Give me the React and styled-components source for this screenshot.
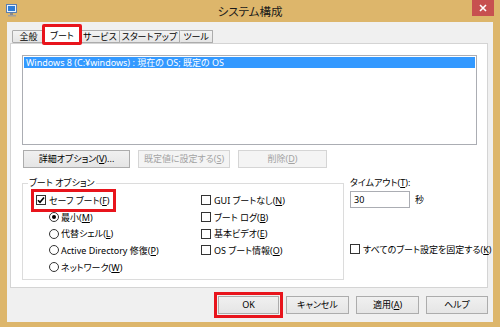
import React from 'react'
import styled, { createGlobalStyle } from 'styled-components'

const GlobalStyle = createGlobalStyle`
  body { margin: 0; background: #fff; }
  * { box-sizing: border-box; }
`

const MARK = '#E8141C'

const Window = styled.div`
  width: 500px;
  height: 327px;
  background: #DDB66B;
  display: flex;
  flex-direction: column;
  font-family: "Noto Sans", "Noto Sans CJK JP", sans-serif;
  font-feature-settings: "palt";
  font-size: 9px;
  color: #000;
`

const TitleBar = styled.div`
  height: 22px;
  display: grid;
  grid-template-columns: 1fr auto 1fr;
  align-items: start;
`

const AppIcon = styled.div`
  padding: 4px 0 0 6px;
  display: flex;
`

const Title = styled.div`
  font-size: 11.5px;
  line-height: 22px;
  padding-top: 1px;
  color: #1a1a1a;
`

const CloseButton = styled.div`
  justify-self: end;
  margin-right: 6px;
  width: 22px;
  height: 16px;
  background: #C75050;
  display: flex;
  align-items: center;
  justify-content: center;
`

const Client = styled.div`
  flex: 1;
  margin: 0 7px 5px;
  background: #F0F0F0;
  display: flex;
  flex-direction: column;
  padding: 4px 5px 0 3px;
`

const TabRow = styled.div`
  height: 17px;
  display: flex;
  align-items: flex-end;
  padding-left: 2px;
`

const Tab = styled.div`
  position: relative;
  z-index: ${p => (p.$active ? 2 : 1)};
  min-width: ${p => (p.$active ? 38 : 33)}px;
  height: ${p => (p.$active ? 19 : 13)}px;
  margin: 0 0 ${p => (p.$active ? -1 : 0)}px ${p => (p.$active ? -2 : 0)}px;
  padding: 0 ${p => (p.$active ? 6 : 2)}px;
  display: flex;
  align-items: center;
  justify-content: center;
  background: ${p => (p.$active ? '#fff' : 'linear-gradient(#F3F3F3, #E5E5E5)')};
  border: 1px solid #ACACAC;
  border-bottom: ${p => (p.$active ? 'none' : '1px solid #ACACAC')};
  border-left-width: ${p => (p.$first || p.$active ? 1 : 0)}px;
  outline: ${p => (p.$marked ? `3px solid ${MARK}` : 'none')};
  outline-offset: -2px;
  border-radius: 1px;
`

const Panel = styled.div`
  height: 245px;
  background: #fff;
  border: 1px solid #D4D4D4;
  padding: 11px 11px 0 11px;
  display: flex;
  flex-direction: column;
`

const ListBox = styled.div`
  width: 455px;
  height: 90px;
  border: 1px solid #ABADB3;
  padding: 1px;
  background: #fff;
`

const ListItem = styled.div`
  height: 11px;
  line-height: 11px;
  padding-left: 2px;
  background: ${p => (p.$selected ? '#3399FF' : 'transparent')};
  color: ${p => (p.$selected ? '#fff' : '#000')};
  white-space: nowrap;
`

const ButtonRow = styled.div`
  display: flex;
  gap: 8px;
  margin: 5px 0 0 1px;
`

const Button = styled.button`
  width: ${p => p.$w}px;
  height: 18px;
  padding: 0;
  font: inherit;
  line-height: 16px;
  white-space: nowrap;
  color: ${p => (p.disabled ? '#A3A3A3' : '#000')};
  background: ${p => (p.disabled ? '#F4F4F4' : 'linear-gradient(#F0F0F0, #E5E5E5)')};
  border: 1px solid ${p => (p.disabled ? '#D5D5D5' : '#ACACAC')};
  border-radius: 0;
  outline: ${p => (p.$marked ? `3px solid ${MARK}` : 'none')};
  outline-offset: 1px;
`

const Lower = styled.div`
  display: flex;
  gap: 6px;
  margin-top: 8px;
`

const Group = styled.fieldset`
  flex: none;
  width: 322px;
  margin: 0;
  padding: 2px 0 4px 13px;
  border: 1px solid #DCDCDC;
  display: flex;
  min-width: 0;
`

const Legend = styled.legend`
  padding: 0 1px;
  margin-left: -8px;
  line-height: 14px;
`

const Column = styled.div`
  width: ${p => p.$w || 'auto'};
  display: flex;
  flex-direction: column;
  align-items: flex-start;
`

const Option = styled.label`
  height: 16.7px;
  display: flex;
  align-items: center;
  gap: ${p => (p.$radio ? 2 : 3)}px;
  margin-left: ${p => (p.$indent ? 13 : 0)}px;
  white-space: nowrap;
  ${p =>
    p.$marked &&
    `
    margin-left: -2px;
    padding: 0 3px 0 2px;
    outline: 3px solid ${MARK};
    outline-offset: 0;
  `}
`

const Box = styled.span`
  width: 10px;
  height: 10px;
  flex: none;
  border: 1px solid #333;
  background: #fff;
  display: flex;
  align-items: center;
  justify-content: center;
`

const Radio = styled.span`
  width: 10px;
  height: 10px;
  flex: none;
  border: 1px solid #333;
  border-radius: 50%;
  background: #fff;
  display: flex;
  align-items: center;
  justify-content: center;
  &::after {
    content: '';
    width: 4px;
    height: 4px;
    border-radius: 50%;
    background: ${p => (p.$checked ? '#000' : 'transparent')};
  }
`

const Side = styled.div`
  flex: 1;
  display: flex;
  flex-direction: column;
  align-items: flex-start;
`

const SideLabel = styled.div`
  line-height: 14px;
`

const TimeoutRow = styled.div`
  display: flex;
  align-items: center;
  gap: 5px;
  margin-top: 1px;
`

const Input = styled.div`
  width: 60px;
  height: 17px;
  border: 1px solid #ABADB3;
  background: #fff;
  padding-left: 3px;
  line-height: 15px;
`

const LockOption = styled.div`
  margin-top: 33px;
`

const Footer = styled.div`
  flex: 1;
  display: flex;
  justify-content: flex-end;
  align-items: flex-start;
  gap: 7px;
  padding-top: 8px;
`

const Key = ({ k }) => (
  <>
    (<u>{k}</u>)
  </>
)

const Check = ({ checked }) => (
  <Box>
    {checked && (
      <svg width="8" height="8" viewBox="0 0 8 8">
        <path d="M1 4.2 L3 6.3 L7 1.5" fill="none" stroke="#000" strokeWidth="1.6" />
      </svg>
    )}
  </Box>
)

const MonitorIcon = () => (
  <svg width="12" height="13" viewBox="0 0 12 13">
    <rect x="0.5" y="0.5" width="10" height="8" fill="#E8F2FC" stroke="#5C7FB0" />
    <rect x="2" y="2" width="7" height="5" fill="#2E7CD6" />
    <rect x="4" y="9" width="3" height="2" fill="#8A8A8A" />
    <rect x="2" y="11" width="8" height="1.5" fill="#A0A0A0" />
  </svg>
)

const tabs = ['全般', 'ブート', 'サービス', 'スタートアップ', 'ツール']

export default function App() {
  return (
    <>
      <GlobalStyle />
      <Window>
        <TitleBar>
          <AppIcon>
            <MonitorIcon />
          </AppIcon>
          <Title>システム構成</Title>
          <CloseButton>
            <svg width="8" height="8" viewBox="0 0 8 8">
              <path d="M1 1 L7 7 M7 1 L1 7" stroke="#fff" strokeWidth="1.6" />
            </svg>
          </CloseButton>
        </TitleBar>
        <Client>
          <TabRow>
            {tabs.map((t, i) => (
              <Tab key={t} $first={i === 0} $active={i === 1} $marked={i === 1}>
                {t}
              </Tab>
            ))}
          </TabRow>
          <Panel>
            <ListBox>
              <ListItem $selected>Windows 8 (C:¥windows) : 現在の OS; 既定の OS</ListItem>
            </ListBox>
            <ButtonRow>
              <Button $w={107}>
                詳細オプション<Key k="V" />...
              </Button>
              <Button $w={92} disabled>
                既定値に設定する<Key k="S" />
              </Button>
              <Button $w={89} disabled>
                削除<Key k="D" />
              </Button>
            </ButtonRow>
            <Lower>
              <Group>
                <Legend>ブート オプション</Legend>
                <Column $w="165px">
                  <Option $marked>
                    <Check checked />
                    <span>セーフ ブート<Key k="F" /></span>
                  </Option>
                  <Option $radio $indent>
                    <Radio $checked />
                    <span>最小<Key k="M" /></span>
                  </Option>
                  <Option $radio $indent>
                    <Radio />
                    <span>代替シェル<Key k="L" /></span>
                  </Option>
                  <Option $radio $indent>
                    <Radio />
                    <span>Active Directory 修復<Key k="P" /></span>
                  </Option>
                  <Option $radio $indent>
                    <Radio />
                    <span>ネットワーク<Key k="W" /></span>
                  </Option>
                </Column>
                <Column>
                  <Option>
                    <Check />
                    <span>GUI ブートなし<Key k="N" /></span>
                  </Option>
                  <Option>
                    <Check />
                    <span>ブート ログ<Key k="B" /></span>
                  </Option>
                  <Option>
                    <Check />
                    <span>基本ビデオ<Key k="E" /></span>
                  </Option>
                  <Option>
                    <Check />
                    <span>OS ブート情報<Key k="O" /></span>
                  </Option>
                </Column>
              </Group>
              <Side>
                <SideLabel>
                  タイムアウト<Key k="T" />:
                </SideLabel>
                <TimeoutRow>
                  <Input>30</Input>
                  <span>秒</span>
                </TimeoutRow>
                <LockOption>
                  <Option>
                    <Check />
                    <span>すべてのブート設定を固定する<Key k="K" /></span>
                  </Option>
                </LockOption>
              </Side>
            </Lower>
          </Panel>
          <Footer>
            <Button $w={61} $marked>
              OK
            </Button>
            <Button $w={63}>キャンセル</Button>
            <Button $w={63}>
              適用<Key k="A" />
            </Button>
            <Button $w={62}>ヘルプ</Button>
          </Footer>
        </Client>
      </Window>
    </>
  )
}
